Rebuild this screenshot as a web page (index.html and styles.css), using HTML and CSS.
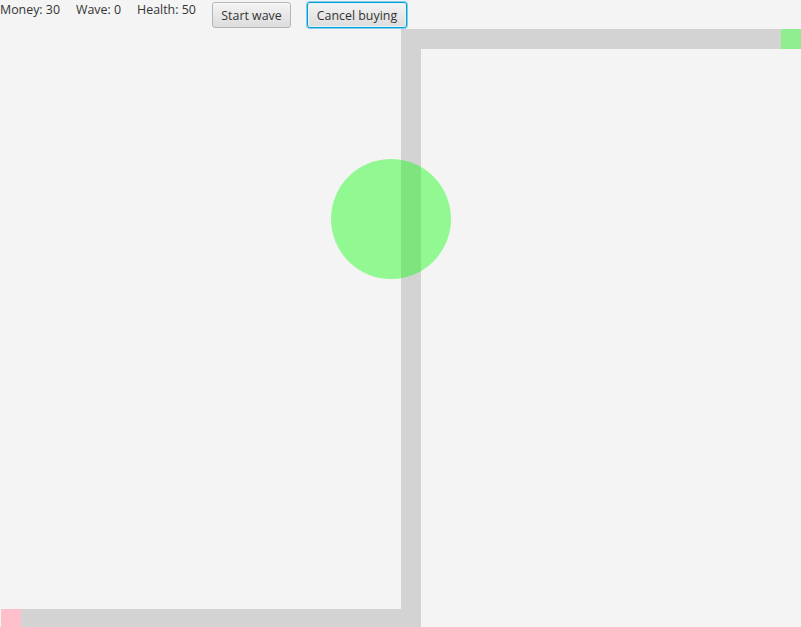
FILE: index.html
```html
<!DOCTYPE html>
<html>
<head>
<meta charset="utf-8">
<link rel="stylesheet" href="styles.css">
</head>
<body>
<div class="toolbar">
  <span class="stat">Money: 30</span>
  <span class="stat">Wave: 0</span>
  <span class="stat">Health: 50</span>
  <button class="btn">Start wave</button>
  <button class="btn focused">Cancel buying</button>
</div>
<div class="map">
  <div class="cell path top"></div>
  <div class="cell goal"></div>
  <div class="cell path vert"></div>
  <div class="cell path bottom"></div>
  <div class="cell spawn"></div>
  <div class="range"></div>
</div>
</body>
</html>
```
FILE: styles.css
```css
html, body {
  margin: 0;
  padding: 0;
  background: #f4f4f4;
  overflow: hidden;
  width: 801px;
  height: 627px;
}
body {
  font-family: "Open Sans", "Noto Sans", sans-serif;
  font-size: 12.4px;
  color: #333;
}
.toolbar {
  display: flex;
  align-items: flex-start;
  gap: 16px;
  height: 29px;
}
.stat {
  line-height: 20px;
}
.btn {
  font-family: inherit;
  font-size: 12.4px;
  color: #333;
  margin-top: 2px;
  height: 26px;
  padding: 0 8.5px;
  border: 1px solid #b5b5b5;
  border-radius: 3px;
  background: linear-gradient(#f4f4f4, #dcdcdc);
  box-shadow: inset 0 1px 0 #fafafa;
}
.btn.focused {
  border-color: #039ed3;
  box-shadow: 0 0 0 1px #82cdea, inset 0 0 0 1px #e7f4fa;
}
.map {
  position: relative;
  margin-left: 1px;
  display: grid;
  grid-template-columns: repeat(40, 20px);
  grid-template-rows: repeat(30, 20px);
}
.path { background: #d3d3d3; }
.top { grid-column: 21 / 40; grid-row: 1; }
.goal { grid-column: 40; grid-row: 1; background: #90ee90; }
.vert { grid-column: 21; grid-row: 1 / 31; }
.bottom { grid-column: 1 / 21; grid-row: 30; }
.spawn { grid-column: 1; grid-row: 30; background: #ffc0cb; }
.range {
  position: absolute;
  left: 330px;
  top: 130px;
  width: 120px;
  height: 120px;
  border-radius: 50%;
  background: rgba(0, 255, 0, 0.4);
}
```
